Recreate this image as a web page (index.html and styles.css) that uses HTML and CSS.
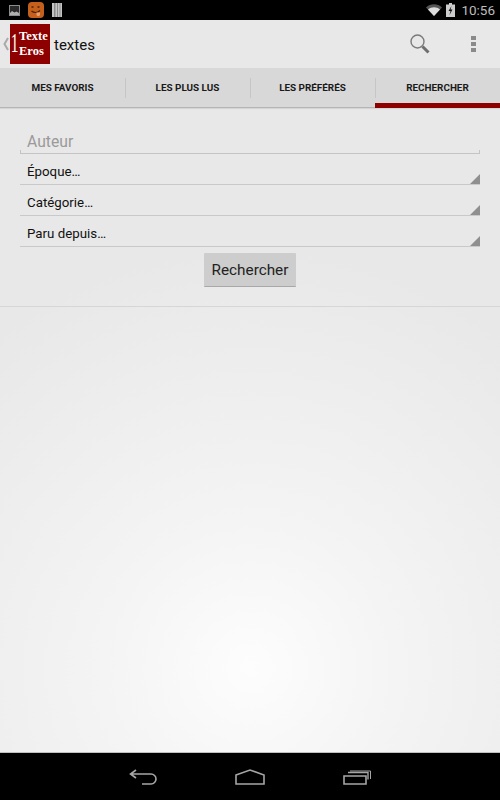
FILE: index.html
```html
<!DOCTYPE html>
<html lang="fr">
<head>
  <meta charset="UTF-8" />
  <title>1 Texte Eros</title>
  <link rel="stylesheet" href="styles.css">
</head>
<body>
  <div class="status-bar">
    <div class="status-left">
      <svg class="ic-picture" width="11" height="11" viewBox="0 0 11 11">
        <rect x="0.5" y="0.5" width="10" height="10" fill="#2a2a2a" stroke="#8c8c8c"/>
        <path d="M1 10V8l2-2 2.500 1.500 2-1L10 8v2z" fill="#b0b0b0"/>
      </svg>
      <div class="app-notif">
        <svg width="16" height="16" viewBox="0 0 16 16">
          <path d="M3.500 5h2M9.500 5h2" stroke="#4a2006" stroke-width="1.600" fill="none"/>
          <path d="M3.500 9c2.500 2 6 2 8.500-.5" stroke="#4a2006" stroke-width="1.300" fill="none"/>
          <path d="M8.500 10.500h3.500v2a1.750 1.750 0 0 1-3.500 0z" fill="#e8a070"/>
        </svg>
      </div>
      <svg width="10" height="14" viewBox="0 0 10 14">
        <path d="M0 0h10v14H0z" fill="#8a8a8a"/>
        <path d="M0 0h2v14H0zM3.500 0h1.500v14H3.500zM6 0h1.500v14H6zM8.500 0H10v14H8.500z" fill="#c4c4c4"/>
      </svg>
    </div>
    <div class="status-right">
      <svg width="16" height="12" viewBox="0 0 16 12">
        <path d="M0 3.500C4.500-.7 11.500-.7 16 3.500L8 12z" fill="#555"/>
        <path d="M2 5.500c3.500-3 8.500-3 12 0L8 12z" fill="#ddd"/>
      </svg>
      <svg width="9" height="14" viewBox="0 0 9 14">
        <path d="M3 0h3v1.500h3V14H0V1.500h3z" fill="#ccc"/>
        <path d="M5.500 3L2.500 8h2l-1 4 3-5.500h-2z" fill="#111"/>
      </svg>
      <span class="clock">10:56</span>
    </div>
  </div>

  <header class="action-bar">
    <svg class="up" width="6" height="14" viewBox="0 0 6 14">
      <path d="M5 1L1.500 7 5 13" stroke="#aaa" stroke-width="2" fill="none"/>
    </svg>
    <div class="logo">
      <span class="logo-one">1</span>
      <span class="logo-words"><span>Texte</span><span>Eros</span></span>
    </div>
    <span class="title">textes</span>
    <div class="actions">
      <svg class="ic-search" width="20" height="20" viewBox="0 0 20 20">
        <circle cx="7.500" cy="7.500" r="6.500" stroke="#7a7a7a" stroke-width="1.400" fill="none"/>
        <path d="M12.500 12.500l6 6" stroke="#6e6e6e" stroke-width="3"/>
      </svg>
      <div class="overflow"><i></i><i></i><i></i></div>
    </div>
  </header>

  <nav class="tabs">
    <a class="tab">MES FAVORIS</a>
    <a class="tab">LES PLUS LUS</a>
    <a class="tab">LES PRÉFÉRÉS</a>
    <a class="tab active">RECHERCHER</a>
  </nav>

  <main class="content">
    <form class="search-form">
      <div class="field">Auteur</div>
      <div class="spinner">Époque…</div>
      <div class="spinner">Catégorie…</div>
      <div class="spinner">Paru depuis…</div>
      <button type="button" class="btn">Rechercher</button>
    </form>
  </main>

  <footer class="nav-bar">
    <svg class="nav-back" width="28" height="16" viewBox="0 0 28 16">
      <path d="M7 1L1.500 5 7 9M2 5h20a4.500 4.500 0 0 1 0 10h-9" stroke="#a6a6a6" stroke-width="1.600" fill="none"/>
    </svg>
    <svg class="nav-home" width="30" height="16" viewBox="0 0 30 16">
      <path d="M1 6l14-5 14 5v9H1z" stroke="#a6a6a6" stroke-width="1.600" fill="none"/>
    </svg>
    <svg class="nav-recent" width="28" height="15" viewBox="0 0 28 15">
      <path d="M1 6h22v8H1z" stroke="#a6a6a6" stroke-width="1.600" fill="none"/>
      <path d="M5 2.500h20v7" stroke="#a6a6a6" stroke-width="1.400" fill="none"/>
      <path d="M7 1h20.500v8" stroke="#a6a6a6" stroke-width="1" fill="none"/>
    </svg>
  </footer>
</body>
</html>
```

FILE: styles.css
```css
html, body {
  margin: 0;
  height: 800px;
}
body {
  width: 500px;
  display: flex;
  flex-direction: column;
  overflow: hidden;
  font-family: Roboto, sans-serif;
  color: #111;
  background: #e8e8e8;
}
.status-bar {
  height: 20px;
  background: #000;
  display: flex;
  justify-content: space-between;
  align-items: center;
  flex-shrink: 0;
}
.status-left {
  display: flex;
  align-items: center;
  gap: 7px;
  padding-left: 9px;
}
.status-left .app-notif {
  margin-right: 1px;
  margin-left: 1px;
}
.app-notif {
  width: 16px;
  height: 16px;
  border-radius: 4px;
  background: #c4601c;
}
.app-notif svg {
  display: block;
}
.status-right {
  display: flex;
  align-items: center;
  gap: 4px;
  padding-right: 5px;
}
.clock {
  color: #bdbdbd;
  font-size: 13.500px;
  margin-left: 2px;
}
.action-bar {
  height: 48px;
  flex-shrink: 0;
  display: flex;
  align-items: center;
  background: #e8e8e8;
}
.up {
  margin-left: 3px;
  margin-right: 1px;
}
.logo {
  width: 40px;
  height: 40px;
  background: #8e0000;
  color: #fff;
  font-family: "Liberation Serif", serif;
  font-weight: bold;
  display: flex;
  align-items: center;
  overflow: hidden;
}
.logo-one {
  flex: none;
  width: 9px;
  font-size: 14px;
  line-height: 1;
  font-weight: normal;
  text-align: center;
  transform: scale(1.1, 1.9);
}
.logo-words {
  display: flex;
  flex-direction: column;
  font-size: 12.500px;
  line-height: 15px;
}
.title {
  font-size: 15px;
  margin-left: 4px;
  margin-top: 2px;
  color: #111;
}
.actions {
  margin-left: auto;
  display: flex;
  align-items: center;
  gap: 41px;
  padding-right: 24px;
}
.ic-search {
  display: block;
}
.overflow {
  display: flex;
  flex-direction: column;
  gap: 2px;
}
.overflow i {
  width: 5px;
  height: 4px;
  background: #8a8a8a;
}
.tabs {
  height: 40px;
  flex-shrink: 0;
  display: flex;
  background: #d8d8d8;
  box-sizing: border-box;
  border-bottom: 1px solid #b5b5b5;
  box-shadow: 0 1px 1px rgba(0,0,0,0.08);
  position: relative;
}
.tab {
  flex: 1;
  display: flex;
  align-items: center;
  justify-content: center;
  font-size: 9.900px;
  font-weight: bold;
  color: #1a1a1a;
  position: relative;
}
.tab + .tab::before {
  content: "";
  position: absolute;
  left: 0;
  top: 10px;
  height: 20px;
  width: 1px;
  background: #c6c6c6;
}
.tab.active::after {
  content: "";
  position: absolute;
  left: 0;
  right: 0;
  bottom: -1px;
  height: 5px;
  background: #8e0000;
}
.content {
  flex: 1;
  background: radial-gradient(ellipse 420px 420px at 250px 560px, #fdfdfd 0%, #f4f4f4 35%, #e8e8e8 100%);
}
.search-form {
  display: flex;
  flex-direction: column;
  padding: 23px 20px 19px;
  border-bottom: 1px solid #d6d6d6;
}
.field {
  height: 22px;
  padding-left: 7px;
  font-size: 15.700px;
  line-height: 21px;
  color: #9a9a9a;
  border-bottom: 1px solid #c4c4c4;
  position: relative;
}
.field::before,
.field::after {
  content: "";
  position: absolute;
  bottom: 0;
  width: 1px;
  height: 3px;
  background: #c4c4c4;
}
.field::before {
  left: 0;
}
.field::after {
  right: 0;
}
.spinner {
  height: 30px;
  padding-left: 7px;
  font-size: 13.300px;
  line-height: 36px;
  color: #111;
  border-bottom: 1px solid #c9c9c9;
  position: relative;
}
.spinner::after {
  content: "";
  position: absolute;
  right: 0;
  bottom: 0;
  border-style: solid;
  border-width: 0 0 10px 10px;
  border-color: transparent transparent #8f8f8f transparent;
}
.btn {
  align-self: center;
  width: 92px;
  height: 34px;
  margin-top: 6px;
  padding: 0;
  font-family: Roboto, sans-serif;
  font-size: 15.300px;
  color: #222;
  background: #cdcdcd;
  border: none;
  border-bottom: 1px solid #a8a8a8;
  border-radius: 1px;
}
.nav-bar {
  height: 48px;
  flex-shrink: 0;
  background: #000;
  border-top: 1px solid #c0c0c0;
  box-sizing: border-box;
  display: flex;
  align-items: center;
  justify-content: center;
  gap: 78px;
  padding-top: 1px;
}
```
